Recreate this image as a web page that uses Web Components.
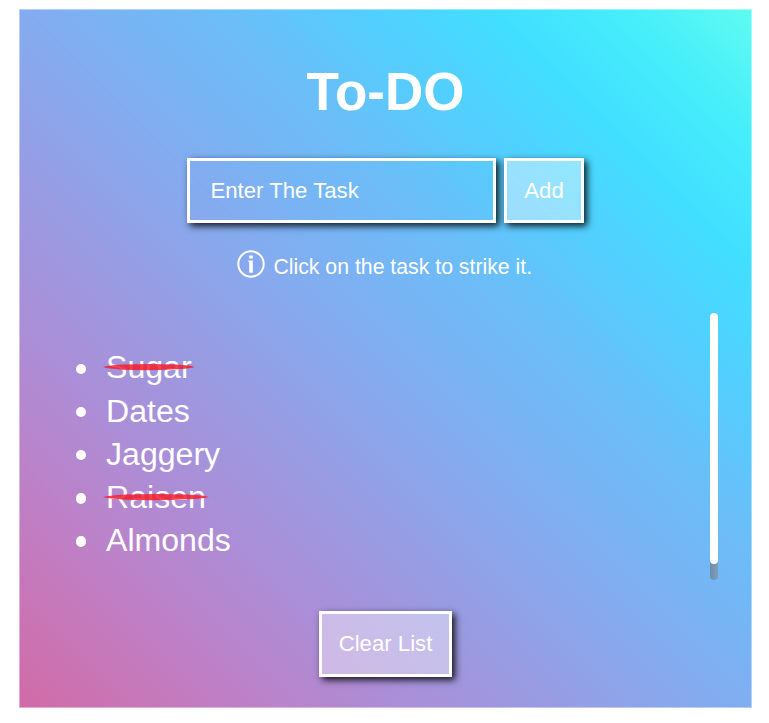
<!DOCTYPE html>
<html lang="en">
<head>
<meta charset="utf-8">
<title>To-DO</title>
<style>
html,body{margin:0;background:#fff}
body{font-family:"Liberation Sans",Arial,sans-serif;color:#fff;width:769px;height:723px;overflow:hidden}
</style>
</head>
<body>
<todo-app>
  <todo-entry slot="entry" label="Enter The Task"></todo-entry>
  <todo-hint slot="hint">Click on the task to strike it.</todo-hint>
  <todo-list slot="list">
    <todo-item done>Sugar</todo-item>
    <todo-item>Dates</todo-item>
    <todo-item>Jaggery</todo-item>
    <todo-item done>Raisen</todo-item>
    <todo-item>Almonds</todo-item>
  </todo-list>
  <todo-button slot="footer" class="clear" style="width:133px">Clear List</todo-button>
</todo-app>
<script>
function define(name, html, setup) {
  const template = document.createElement('template');
  template.innerHTML = html;
  customElements.define(name, class extends HTMLElement {
    constructor() {
      super();
      this.attachShadow({mode: 'open'}).append(template.content.cloneNode(true));
    }
    connectedCallback() { if (setup) setup(this); }
  });
}

define('todo-app', `
<style>
:host{display:flex;flex-direction:column;align-items:center;box-sizing:border-box;width:733px;height:699px;margin:9px 0 0 19px;padding-top:52px;
  border:1px solid rgba(255,255,255,.42);
  background:linear-gradient(45deg,#d16ba5,#c777b9,#ba83ca,#aa8fd8,#9a9ae1,#8aa7ec,#79b3f4,#69bff8,#52cffe,#41dfff,#46eefa,#5ffbf1) border-box}
h1{margin:0;height:60px;font-size:53px;line-height:60px;font-weight:700}
.entry{margin-top:36px;height:65px}
.hint{margin-top:25px;height:36px}
.list{margin-top:29px;height:267px;align-self:stretch;padding-right:33px}
.footer{margin-top:31px}
</style>
<h1>To-DO</h1>
<div class="entry"><slot name="entry"></slot></div>
<div class="hint"><slot name="hint"></slot></div>
<div class="list"><slot name="list"></slot></div>
<div class="footer"><slot name="footer"></slot></div>`);

define('todo-button', `
<style>
:host{display:block;height:66px}
button{box-sizing:border-box;width:100%;height:100%;padding:0;border:3px solid #fff;background:rgba(255,255,255,.4);background-clip:padding-box;color:#fff;font:22.2px "Liberation Sans",Arial,sans-serif;box-shadow:3px 3px 7px rgba(0,0,0,.88);white-space:nowrap}
</style>
<button><slot></slot></button>`);

define('todo-entry', `
<style>
:host{display:flex;gap:8px}
.field{box-sizing:border-box;width:309px;height:65px;border:3px solid #fff;padding-left:20.4px;font-size:22.2px;line-height:59px;box-shadow:3px 3px 7px rgba(0,0,0,.88)}
todo-button{width:80px;height:65px}
</style>
<div class="field" role="textbox"></div><todo-button>Add</todo-button>`,
el => { el.shadowRoot.querySelector('.field').textContent = el.getAttribute('label'); });

define('todo-hint', `
<style>
:host{display:flex;align-items:flex-start;gap:8px;margin-right:1.5px;font-size:21.25px;line-height:39px;white-space:nowrap}
svg{display:block;width:28px;height:28px;margin-top:2px}
</style>
<svg viewBox="0 0 28 28"><circle cx="14" cy="14" r="12.7" fill="none" stroke="#fff" stroke-width="2"/><path d="M12.2 5.4H15.8V8.6H12.2ZM11.4 10.5H15.8V22.8H12.2V12.1H11.4Z" fill="#fff"/></svg>
<span><slot></slot></span>`);

define('todo-list', `
<style>
:host{display:flex;height:100%;justify-content:space-between}
.items{display:flex;flex-direction:column;padding:32.4px 0 0 86px}
.track{display:flex;width:8px;height:267px;border-radius:4px;background:linear-gradient(90deg,#6c8dab,#809eb9)}
.thumb{width:8px;height:251px;border-radius:4px;background:#fff}
</style>
<div class="items" role="list"><slot></slot></div>
<div class="track"><div class="thumb"></div></div>`);

define('todo-item', `
<style>
:host{display:block;height:43.2px;font-size:32.1px;line-height:44px}
.row{position:relative;width:max-content}
.row::before{content:"";position:absolute;left:-30px;top:18.2px;width:10.4px;height:10.4px;border-radius:50%;background:#fff}
svg{display:none;position:absolute;left:-3px;top:18px;width:calc(100% + 6px);height:8px;overflow:visible}
:host([done]) svg{display:block}
</style>
<div class="row"><slot></slot><svg viewBox="0 0 100 8" preserveAspectRatio="none"><path d="M0 4.1Q5 2.6 21 1.6Q50 .4 80 1.6Q96 2.6 100 3.9Q96 5.4 80 6.3Q50 8 21 6.8Q5 5.6 0 4.1Z" fill="#f51d2c" fill-opacity=".85"/></svg></div>`);
</script>
</body>
</html>
